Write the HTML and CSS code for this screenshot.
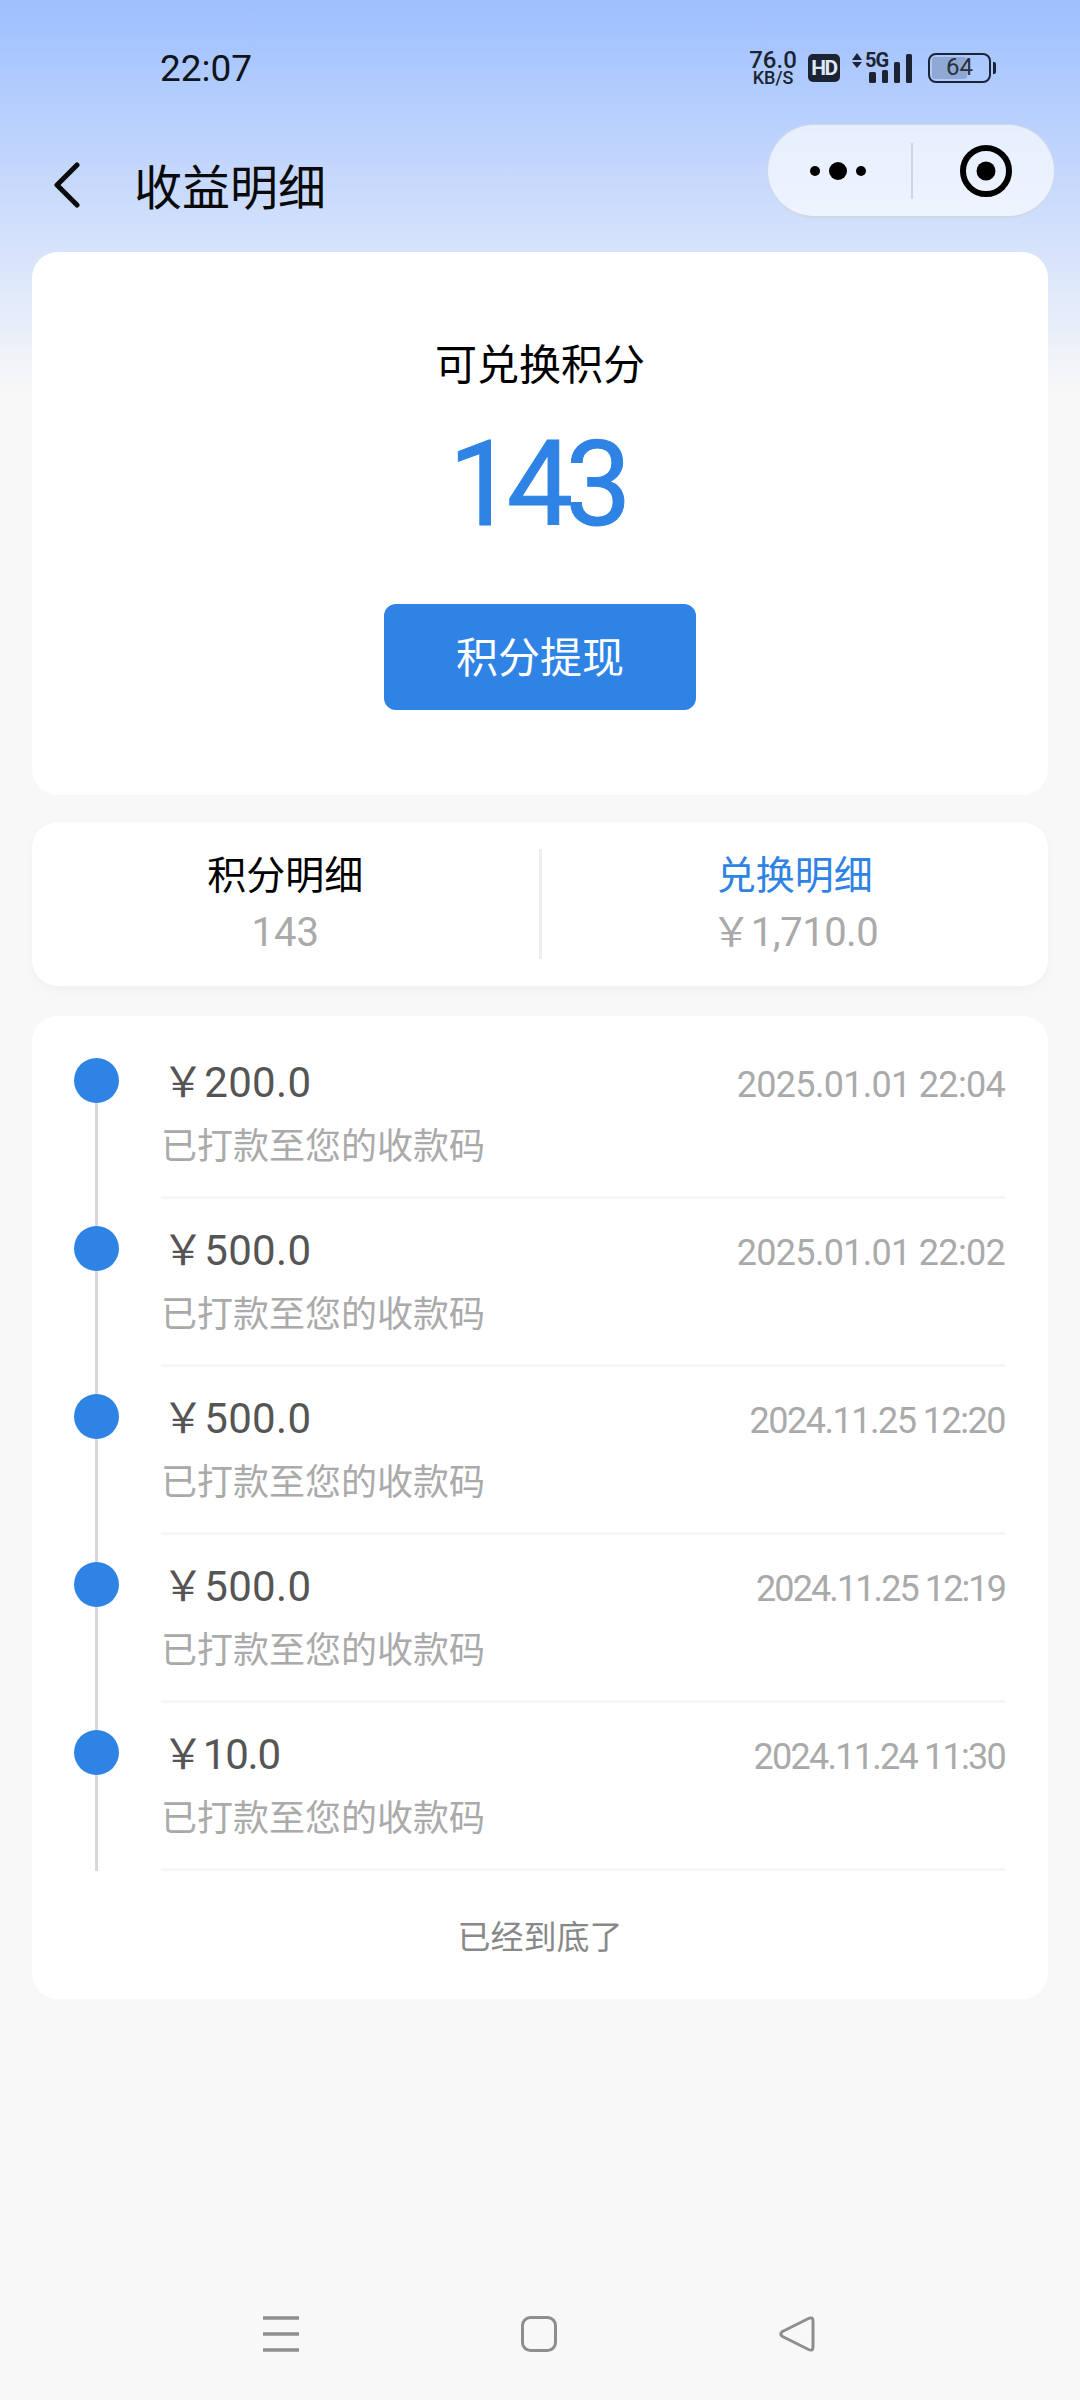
FILE: index.html
```html
<!DOCTYPE html>
<html>
<head>
    <title>收益明细</title>
    <link rel="stylesheet" href="styles.css">
</head>
<body>
    <div class="page">
        <header class="top">
            <div class="status">
                <span class="time">22:07</span>
                <div class="status-icons">
                    <div class="speed"><b>76.0</b><span>KB/S</span></div>
                    <span class="hd">HD</span>
                    <svg class="signal" width="60" height="44" viewBox="0 -6 60 44">
                        <path d="M0 8 L5 1 L10 8 Z M0 10 L10 10 L5 16 Z" fill="#1c2433"/>
                        <text x="13" y="15" class="five-g">5G</text>
                        <rect x="17" y="20" width="7" height="11" rx="1.5" fill="#1c2433"/>
                        <rect x="30" y="18" width="6" height="13" rx="1.5" fill="#1c2433"/>
                        <rect x="42" y="10" width="6" height="21" rx="1.5" fill="#1c2433"/>
                        <rect x="54" y="2" width="6" height="29" rx="1.5" fill="#1c2433"/>
                    </svg>
                    <div class="battery">
                        <div class="battery-body">
                            <div class="battery-fill"></div>
                            <span>64</span>
                        </div>
                        <div class="battery-tip"></div>
                    </div>
                </div>
            </div>
            <div class="navbar">
                <svg class="back" width="28" height="46" viewBox="0 0 28 46">
                    <path d="M24 3 L4 23 L24 43" fill="none" stroke="#0a0a0a" stroke-width="5" stroke-linecap="round" stroke-linejoin="round"/>
                </svg>
                <h1>收益明细</h1>
                <div class="capsule">
                    <div class="capsule-more">
                        <i class="dot"></i><i class="dot big"></i><i class="dot"></i>
                    </div>
                    <div class="capsule-line"></div>
                    <div class="capsule-close">
                        <svg width="54" height="54" viewBox="0 0 54 54">
                            <circle cx="27" cy="27" r="23" fill="none" stroke="#000" stroke-width="6"/>
                            <circle cx="27" cy="27" r="9.5" fill="#000"/>
                        </svg>
                    </div>
                </div>
            </div>
        </header>

        <section class="card points">
            <div class="points-label">可兑换积分</div>
            <div class="points-value">143</div>
            <div class="points-btn">积分提现</div>
        </section>

        <section class="card tabs">
            <div class="tab">
                <div class="tab-name">积分明细</div>
                <div class="tab-num">143</div>
            </div>
            <div class="tab-line"></div>
            <div class="tab active">
                <div class="tab-name">兑换明细</div>
                <div class="tab-num">￥1,710.0</div>
            </div>
        </section>

        <section class="card records">
            <div class="record">
                <div class="rail"><i></i></div>
                <div class="record-body">
                    <div class="record-top"><span class="amount">￥200.0</span><span class="date">2025.01.01 22:04</span></div>
                    <div class="record-desc">已打款至您的收款码</div>
                </div>
            </div>
            <div class="record">
                <div class="rail"><i></i></div>
                <div class="record-body">
                    <div class="record-top"><span class="amount">￥500.0</span><span class="date">2025.01.01 22:02</span></div>
                    <div class="record-desc">已打款至您的收款码</div>
                </div>
            </div>
            <div class="record">
                <div class="rail"><i></i></div>
                <div class="record-body">
                    <div class="record-top"><span class="amount">￥500.0</span><span class="date tight-1">2024.11.25 12:20</span></div>
                    <div class="record-desc">已打款至您的收款码</div>
                </div>
            </div>
            <div class="record">
                <div class="rail"><i></i></div>
                <div class="record-body">
                    <div class="record-top"><span class="amount">￥500.0</span><span class="date tight-3">2024.11.25 12:19</span></div>
                    <div class="record-desc">已打款至您的收款码</div>
                </div>
            </div>
            <div class="record">
                <div class="rail"><i></i></div>
                <div class="record-body">
                    <div class="record-top"><span class="amount small">￥10.0</span><span class="date tight-2">2024.11.24 11:30</span></div>
                    <div class="record-desc">已打款至您的收款码</div>
                </div>
            </div>
            <div class="records-end">已经到底了</div>
        </section>

        <footer class="sysnav">
            <svg width="36" height="36" viewBox="0 0 36 36">
                <path d="M0 2 H36 M0 18 H36 M0 34 H36" stroke="#8e8e8e" stroke-width="3.4" fill="none"/>
            </svg>
            <svg width="36" height="36" viewBox="0 0 36 36">
                <rect x="1.5" y="1.5" width="33" height="33" rx="8" fill="none" stroke="#8e8e8e" stroke-width="3"/>
            </svg>
            <svg width="36" height="36" viewBox="0 0 36 36">
                <path d="M29.5 2.5 Q34 0.5 34 5 V31 Q34 35.5 29.5 33.5 L3.5 20.5 Q0 18 3.5 15.5 Z" fill="none" stroke="#8e8e8e" stroke-width="3" stroke-linejoin="round"/>
            </svg>
        </footer>
    </div>
</body>
</html>
```

FILE: styles.css
```css
* {
    box-sizing: border-box;
}

body {
    margin: 0;
    padding: 0;
    background: #f8f8f8;
}

.page {
    width: 1080px;
    height: 2400px;
    display: flex;
    flex-direction: column;
    font-family: Roboto, "Noto Sans CJK SC", sans-serif;
    background: linear-gradient(180deg, #9dbfff 0, #f8f8f8 395px);
}

/* status bar + title */
.top {
    height: 252px;
    padding: 0 25px 0 50px;
}

.status {
    height: 124px;
    display: flex;
    justify-content: space-between;
    align-items: center;
    padding: 12px 0 0 110px;
}

.time {
    font-size: 37px;
    color: #10141c;
}

.status-icons {
    display: flex;
    align-items: center;
    margin-right: 59px;
}

.speed {
    width: 48px;
    display: flex;
    flex-direction: column;
    align-items: center;
    color: #1c2433;
}

.speed b {
    font-size: 24px;
    font-weight: 500;
    line-height: 20px;
}

.speed span {
    font-size: 18px;
    font-weight: 500;
    line-height: 16px;
    white-space: nowrap;
}

.hd {
    width: 32px;
    height: 28px;
    margin-left: 11px;
    background: #1c2433;
    border-radius: 5px;
    color: #dfe8fb;
    font-size: 21px;
    font-weight: 700;
    line-height: 28px;
    text-align: center;
    letter-spacing: -1.5px;
}

.five-g {
    font-family: Roboto, sans-serif;
    font-size: 20px;
    font-weight: 700;
    letter-spacing: -1px;
    fill: #1c2433;
}

.signal {
    margin-left: 12px;
}

.battery {
    display: flex;
    align-items: center;
    gap: 2px;
    margin-left: 16px;
}

.battery-body {
    position: relative;
    width: 63px;
    height: 30px;
    border: 2.5px solid #1c2433;
    border-radius: 8px;
    color: #2a3140;
    font-size: 24px;
    line-height: 25px;
    text-align: center;
}

.battery-body span {
    position: relative;
}

.battery-fill {
    position: absolute;
    left: 2px;
    top: 2px;
    bottom: 2px;
    width: 35px;
    background: #8fa9d4;
    border-radius: 3px;
}

.battery-tip {
    width: 3px;
    height: 12px;
    background: #1c2433;
    border-radius: 0 2px 2px 0;
}

.navbar {
    display: flex;
    align-items: center;
    height: 94px;
}

.back {
    margin: 28px 0 0 3px;
}

.navbar h1 {
    flex: 1;
    margin: 26px 0 0 53px;
    font-size: 48px;
    font-weight: 400;
    color: #0a0a0a;
}

.capsule {
    width: 288px;
    height: 94px;
    display: flex;
    align-items: center;
    background: rgba(255,255,255,0.65);
    border: 1px solid #cfd8e6;
    border-bottom: 2px solid #cfd8e6;
    border-radius: 47px;
}

.capsule-more {
    width: 143px;
    display: flex;
    justify-content: center;
    align-items: center;
    gap: 9px;
    padding-right: 4px;
}

.dot {
    width: 10px;
    height: 10px;
    background: #000;
    border-radius: 50%;
}

.dot.big {
    width: 18px;
    height: 18px;
}

.capsule-line {
    width: 2px;
    height: 56px;
    background: #ced6e3;
}

.capsule-close {
    flex: 1;
    display: flex;
    justify-content: center;
    padding-left: 4px;
}

/* cards */
.card {
    width: 1016px;
    margin: 0 32px;
    background: #fff;
    border-radius: 26px;
}

.points {
    height: 543px;
    display: flex;
    flex-direction: column;
    align-items: center;
    padding-top: 87px;
}

.points-label {
    font-size: 42px;
    line-height: 54px;
    color: #000;
}

.points-value {
    margin: 22px 0 0 -8px;
    font-size: 118px;
    font-weight: 400;
    -webkit-text-stroke: 1px #2e83e5;
    line-height: 140px;
    letter-spacing: -8px;
    color: #2e83e5;
}

.points-btn {
    width: 312px;
    height: 106px;
    margin-top: 49px;
    padding-top: 3px;
    background: #2e83e5;
    border-radius: 12px;
    color: #fff;
    font-size: 42px;
    line-height: 103px;
    text-align: center;
}

.tabs {
    height: 164px;
    margin-top: 27px;
    display: flex;
    align-items: center;
    box-shadow: 0 4px 10px rgba(0,0,0,0.03);
}

.tab {
    flex: 1;
    text-align: center;
}

.tab-name {
    font-size: 39px;
    line-height: 56px;
    color: #000;
}

.tab-num {
    margin-top: 1px;
    font-size: 40px;
    line-height: 56px;
    color: #aaa;
}

.tab.active .tab-name {
    color: #2e83e5;
}

.tab.active .tab-num {
    letter-spacing: -0.5px;
}

.tab-line {
    width: 3px;
    height: 110px;
    background: #eee;
}

/* timeline */
.records {
    height: 983px;
    margin-top: 30px;
    padding-top: 15px;
}

.record {
    display: flex;
    height: 168px;
}

.rail {
    position: relative;
    width: 129px;
}

.rail:before {
    content: "";
    position: absolute;
    left: 63px;
    top: 0;
    bottom: 0;
    width: 3px;
    background: #d8d8d8;
}

.record:first-child .rail:before {
    top: 27px;
}

.rail i {
    position: absolute;
    left: 42px;
    top: 27px;
    width: 45px;
    height: 45px;
    background: #2e83e5;
    border-radius: 50%;
}

.record-body {
    flex: 1;
    margin-right: 43px;
    border-bottom: 3px solid #f6f6f6;
}

.record-top {
    display: flex;
    justify-content: space-between;
    align-items: baseline;
    height: 64px;
    margin-top: 17px;
}

.amount {
    padding-left: 1px;
    font-size: 42px;
    letter-spacing: 0.3px;
    color: #555;
}

.amount.small {
    letter-spacing: -1.2px;
}

.date {
    font-size: 36px;
    letter-spacing: -0.7px;
    color: #aaa;
}

.date.tight-1 {
    letter-spacing: -1.5px;
}

.date.tight-2 {
    letter-spacing: -1.75px;
}

.date.tight-3 {
    letter-spacing: -1.9px;
}

.record-desc {
    margin-top: 8px;
    font-size: 36px;
    line-height: 54px;
    color: #aaa;
}

.records-end {
    margin-top: 45px;
    font-size: 33px;
    line-height: 44px;
    color: #888;
    text-align: center;
}

.sysnav {
    display: flex;
    justify-content: space-between;
    align-items: center;
    margin-top: 317px;
    padding: 0 265px 0 263px;
}
```
